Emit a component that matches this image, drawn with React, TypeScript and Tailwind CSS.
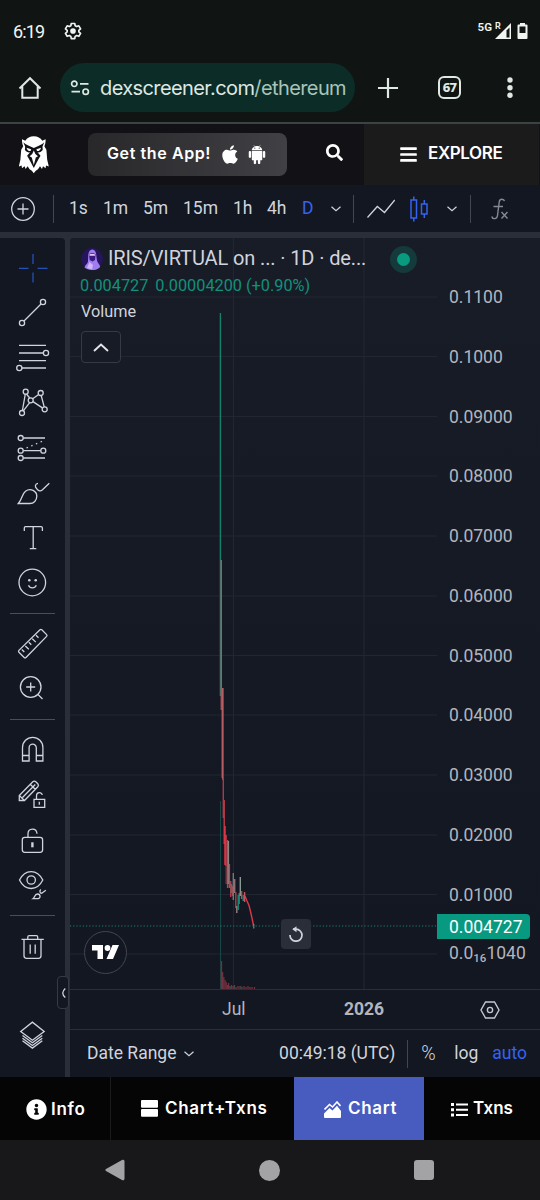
import type { ReactNode } from "react";
import { AiFillAndroid } from "react-icons/ai";
import { FaApple, FaBars, FaInfoCircle, FaSearch } from "react-icons/fa";

const prices = [
  "0.1100",
  "0.1000",
  "0.09000",
  "0.08000",
  "0.07000",
  "0.06000",
  "0.05000",
  "0.04000",
  "0.03000",
  "0.02000",
  "0.01000",
];

const gridLines = [
  59, 118.5, 178.5, 238, 298, 358, 417.5, 477, 537, 597, 656.5, 716,
];

// x, top, bottom, colour
const candles: [number, number, number, string][] = [
  [150.4, 75, 458, "#12826f"],
  [151.3, 322, 472, "#b0575b"],
  [152.2, 450, 540, "#c2434f"],
  [152.9, 450, 542, "#b9656a"],
  [153.3, 540, 580, "#a83b48"],
  [154.2, 562, 606, "#c03b48"],
  [155, 588, 627, "#f23645"],
  [156, 597, 628, "#e03a48"],
  [156.2, 628, 646, "#7b3340"],
  [157.6, 602, 650, "#8b5a60"],
  [158.4, 603, 646, "#8a8585"],
  [159.4, 626, 650, "#b04a55"],
  [160.7, 643, 659, "#b03d49"],
  [161.5, 646, 655, "#12907a"],
  [162.4, 648, 658, "#b03d49"],
  [163.3, 635, 662, "#6d7a78"],
  [164.7, 641, 655, "#8a7075"],
  [165.8, 654, 670, "#b03d49"],
  [166.8, 668, 675, "#9a8080"],
  [168.2, 657, 672, "#12907a"],
  [169.2, 655, 666, "#12907a"],
  [170.3, 639, 658, "#889b93"],
  [171.6, 653, 661, "#e03a48"],
  [173.2, 657, 663, "#12907a"],
  [174.6, 654, 664, "#c05a62"],
];

const volumes: [number, number][] = [
  [151.5, 28],
  [152.6, 17],
  [153.8, 12],
  [155, 9],
  [156.2, 7],
  [157.4, 4],
  [158.6, 6],
  [160, 3],
  [161.5, 4],
  [163, 3],
  [164.5, 4],
  [166, 2],
  [168, 3],
  [170, 3],
  [172, 2],
  [174, 3],
  [176, 2],
  [178, 3],
  [180, 2],
  [182, 2],
  [184.5, 2],
];

function Tool({
  children,
  className = "text-[#d1d4dc]",
}: {
  children: ReactNode;
  className?: string;
}) {
  return (
    <svg
      viewBox="0 0 65 45"
      className={`block h-[45px] w-[65px] shrink-0 ${className}`}
      fill="none"
      stroke="currentColor"
      strokeWidth="1.3"
    >
      {children}
    </svg>
  );
}

function ToolDivider() {
  return (
    <div className="flex h-4 shrink-0 items-center px-2.5">
      <div className="h-px w-full bg-[#4a4d57]" />
    </div>
  );
}

function Chevron({ className = "" }: { className?: string }) {
  return (
    <svg
      viewBox="0 0 10 6"
      className={`h-1.5 w-2.5 shrink-0 ${className}`}
      fill="none"
    >
      <path d="M.5.8 5 4.8 9.5.8" stroke="#d1d4dc" strokeWidth="1.2" />
    </svg>
  );
}

function StatusBar() {
  return (
    <div className="flex h-[62px] items-center text-[#f1f5f2]">
      <span className="ml-[13px] mt-0.5 w-[50px] font-['Roboto'] text-[18px] leading-none tracking-[-0.9px]">
        6:19
      </span>
      <svg viewBox="0 0 24 24" className="h-5 w-5" fill="none">
        <path
          d="M9.9 3h4.2l.5 2.7 1.8 1 2.6-.9 2.1 3.6-2.1 1.8v1.8l2.1 1.8-2.1 3.6-2.6-.9-1.8 1-.5 2.7H9.9l-.5-2.7-1.8-1-2.6.9-2.1-3.6L5 13V11.200L2.900 9.400 5 5.800l2.600.9 1.800-1z"
          stroke="currentColor"
          strokeWidth="2"
          strokeLinejoin="round"
        />
        <circle cx="12" cy="12" r="3.4" fill="currentColor" />
      </svg>
      <span className="ml-auto mb-[7px] font-['Roboto'] text-[11.5px] font-semibold leading-none">
        5G
      </span>
      <svg viewBox="0 0 34 20" className="ml-[3px] mr-[11px] h-5 w-[34px]">
        <text
          x="0"
          y="7.500"
          fontSize="9"
          fontWeight="600"
          fontFamily="Roboto"
          fill="currentColor"
        >
          R
        </text>
        <path d="M0 18 16 2v16z" fill="currentColor" />
        <path d="M11.500 9.500 14.500 6.500V16.500h-3z" fill="#101513" />
        <path
          fillRule="evenodd"
          d="M25 2h5v1.500h1.500a1 1 0 0 1 1 1V17a1 1 0 0 1-1 1h-8a1 1 0 0 1-1-1V4.500a1 1 0 0 1 1-1H25zM24.500 5.500v6.500h6V5.500z"
          fill="currentColor"
        />
      </svg>
    </div>
  );
}

function UrlBar() {
  return (
    <div className="flex h-[60px] items-start text-[#dfe8e3]">
      <svg
        viewBox="0 0 24 24"
        className="ml-[18px] mt-[14px] h-6 w-6 shrink-0"
        fill="none"
        stroke="currentColor"
        strokeWidth="2"
      >
        <path d="M1.500 12.500 12 2.200l10.500 10.300M4.300 10.500v11.300h15.400V10.500" />
      </svg>
      <div className="ml-[18px] mt-px flex h-[49px] w-[295px] shrink-0 items-center rounded-full bg-[#0c2d27]">
        <svg
          viewBox="0 0 20 16"
          className="ml-[10px] h-4 w-5 shrink-0"
          fill="none"
          stroke="currentColor"
          strokeWidth="1.700"
        >
          <circle cx="4.300" cy="3.800" r="2.700" />
          <path d="M10 3.800h8.500M1.500 11.700h8.500" />
          <circle cx="15.700" cy="11.700" r="2.700" />
        </svg>
        <span className="ml-[10px] whitespace-nowrap font-['Inter'] text-[20px] leading-none tracking-[-0.600px]">
          dexscreener.com<span className="text-[#a9c4b8]">/ethereum</span>
        </span>
      </div>
      <svg viewBox="0 0 20 20" className="ml-[23px] mt-[16px] h-5 w-5 shrink-0">
        <path d="M10 0v20M0 10h20" stroke="currentColor" strokeWidth="2.200" />
      </svg>
      <div className="ml-[40px] mt-[14px] flex h-[23px] w-[23px] shrink-0 items-center justify-center rounded-[6px] border-2 border-current font-['Noto_Sans'] text-[13px] font-extrabold leading-none tracking-[-0.800px]">
        67
      </div>
      <svg
        viewBox="0 0 6 22"
        className="ml-[46px] mt-[15px] h-[22px] w-1.5 shrink-0"
        fill="currentColor"
      >
        <circle cx="3" cy="3" r="2.700" />
        <circle cx="3" cy="10.700" r="2.700" />
        <circle cx="3" cy="18.300" r="2.700" />
      </svg>
    </div>
  );
}

function OwlLogo() {
  return (
    <svg viewBox="0 0 30 38" className="ml-[19px] h-[38px] w-[30px]">
      <path
        d="M3 3.200 6.300 4.800Q9 .3 14.800.3t8.500 4.500l3.300-1.600c.1 3-.3 5-1.200 7l2 3.500.8 10 1.600 6.800-2.800-1-.4 2.700-2.600-2-1 2.700-2-2.700-2 3c-1.500.8-3 2-4.200 4.100-1.200-2.100-2.700-3.300-4.200-4.100l-2-3-2 2.700-1-2.700-2.600 2-.4-2.700-2.800 1 1.600-6.800.8-10 2-3.500C3.300 8.200 2.900 6.200 3 3.200z"
        fill="#fff"
      />
      <path
        d="M4.300 6.300q2 2.300 5.500 3.400l5 2.300 5-2.300q3.500-1.100 5.500-3.400l-1.800 4.200.2 3.500q-2 3-5.200 2.300l3 3.400-2.200 3.800-4.500 8.500-4.500-8.500-2.200-3.800 3-3.400q-3.200.7-5.200-2.300l.2-3.500z"
        fill="#111116"
      />
      <path
        d="m14.800 14.500 1.600 3.500 2.600 2.200-2.200 1.300-2 7.500-2-7.500-2.200-1.300 2.600-2.200zM7.500 11.700l4.700 1.600-.6 1.700q-3 .4-4.100-3.300zM22.100 11.700l-4.700 1.600.6 1.700q3 .4 4.100-3.300z"
        fill="#fff"
      />
    </svg>
  );
}

function AppHeader() {
  return (
    <div className="flex h-[61px] items-center bg-[#111116] font-['Inter'] font-semibold text-white">
      <OwlLogo />
      <div className="ml-[39px] flex h-[43px] w-[199px] items-center rounded-lg bg-gradient-to-r from-[#28282b] to-[#414044]">
        <span className="-mt-1 ml-[19px] w-[114px] whitespace-nowrap text-[16px] leading-none tracking-[0.600px]">
          Get the App!
        </span>
        <FaApple className="h-[21px] w-[18px]" />
        <AiFillAndroid className="ml-[7px] h-[23px] w-[22px]" />
      </div>
      <FaSearch className="-mt-1 ml-[39px] h-[17px] w-[17px]" />
      <div className="ml-auto flex h-full w-[176px] items-center border-r border-[#111116] bg-[#1b1b1c] pb-1">
        <FaBars className="ml-[36px] mt-[3px] h-[19px] w-[17px]" />
        <span className="ml-[11px] mt-px text-[17px] leading-none tracking-[-0.400px]">
          EXPLORE
        </span>
      </div>
    </div>
  );
}

function ChartToolbar() {
  const intervals = [
    { label: "1s", className: "w-[34px]" },
    { label: "1m", className: "w-[40px]" },
    { label: "5m", className: "w-[40px]" },
    { label: "15m", className: "w-[50px]" },
    { label: "1h", className: "w-[34px]" },
    { label: "4h", className: "w-[35px]" },
    { label: "D", className: "w-[29px] text-[#3563f0]" },
  ];

  return (
    <div className="flex h-[47px] items-center bg-[#131722] text-[#d1d4dc]">
      <svg
        viewBox="0 0 24 24"
        className="ml-[11px] mt-px h-6 w-6"
        fill="none"
        stroke="currentColor"
        strokeWidth="1.300"
      >
        <circle cx="12" cy="12" r="11.300" />
        <path d="M12 6.500v11M6.500 12h11" />
      </svg>
      <div className="ml-[18px] h-7 w-px bg-[#434651]" />
      <div className="ml-[15px] mt-px flex text-[17.500px] leading-none">
        {intervals.map((item) => (
          <span key={item.label} className={item.className}>
            {item.label}
          </span>
        ))}
      </div>
      <Chevron />
      <div className="ml-[12px] h-7 w-px bg-[#434651]" />
      <svg
        viewBox="0 0 28 20"
        className="ml-[13px] h-5 w-7"
        fill="none"
        stroke="currentColor"
        strokeWidth="1.300"
      >
        <path d="m.5 18.500 9.800-11 7.200 6L27.800 1" />
      </svg>
      <svg
        viewBox="0 0 18 26"
        className="ml-[15px] h-[26px] w-[18px]"
        fill="none"
        stroke="#3563f0"
        strokeWidth="1.500"
      >
        <path d="M1 4h5.500v18H1zM3.800 4V.5M3.800 22v3.500M11.500 8H17v10h-5.500zM14.300 8V4M14.300 18v4" />
      </svg>
      <Chevron className="ml-[19px]" />
      <div className="ml-[13px] h-7 w-px bg-[#434651]" />
      <svg
        viewBox="0 0 18 22"
        className="ml-[20px] h-[22px] w-[18px] text-[#868993]"
        fill="none"
        stroke="currentColor"
        strokeWidth="1.400"
      >
        <path d="M13.500 3.200C13 1 9 .2 8.300 3.500L6.500 17.500C6 21.500 1.500 21.500.8 18.500M2.500 8.500h9.500M10.500 14l6 6.500M16.500 14l-6 6.500" />
      </svg>
    </div>
  );
}

function DrawingTools() {
  return (
    <div className="relative flex w-[65px] shrink-0 flex-col rounded-tr bg-[#131722] pt-[7px]">
      <Tool className="text-[#2451b8]">
        <path d="M19 23.300h9.500M37.500 23.300h10M33 9v10M33 27.500v10" />
      </Tool>
      <Tool>
        <circle cx="43" cy="12" r="2.600" />
        <circle cx="22" cy="33" r="2.600" />
        <path d="m24 31 17-17" />
      </Tool>
      <Tool>
        <path d="M19 10.400h27M19 18h24M19 25.700h27M22 33h24" />
        <circle cx="46" cy="18" r="2.600" />
        <circle cx="19.300" cy="33" r="2.600" />
      </Tool>
      <Tool>
        <circle cx="25.700" cy="11.700" r="2.500" />
        <circle cx="40.700" cy="13" r="2.500" />
        <circle cx="30.700" cy="20.300" r="2.500" />
        <circle cx="22" cy="33" r="2.500" />
        <circle cx="44.700" cy="29.300" r="2.500" />
        <path d="m25.300 14.200-2.900 16.300M26.500 14l3.200 4M29.700 22.600l-6.400 8.200M32.700 18.800l6-4.300M41.200 15.500l3 11.300M33 21.600l9.400 6.300" />
      </Tool>
      <Tool>
        <path d="M23.300 13H45M23.300 25.700h17.400M23.300 33H45" />
        <circle cx="20.700" cy="13" r="2.500" />
        <circle cx="20.700" cy="25.700" r="2.500" />
        <circle cx="43.300" cy="25.700" r="2.500" />
        <circle cx="20.700" cy="33" r="2.500" />
        <path d="m26.500 23 16.500-7" strokeDasharray="1.500 3.600" />
      </Tool>
      <Tool>
        <path d="M18.300 33.500c4.200-4.500 3.500-9.500 7.200-12.300 5-3.700 11.300-.2 11.300 5 0 4.300-3 7.300-7 7.300zM38 13.300c-3.300.5-3.200 3.500-1.200 5.500 2.200 2.700 4 2.500 5.700 1l6.800-6.500" />
      </Tool>
      <Tool>
        <path d="M24.300 16v-3c0-.8.4-1.300 1.300-1.300h15.500c.8 0 1.300.4 1.300 1.300v3M33.200 11.700v22M29.800 33.600h6.500" />
      </Tool>
      <Tool>
        <circle cx="32.300" cy="22.500" r="13.300" />
        <path d="M28.500 25.300c1.300 3.500 6.300 3.500 7.800 0" />
        <circle cx="29.300" cy="20.300" r="1.300" fill="currentColor" stroke="none" />
        <circle cx="35.700" cy="20.300" r="1.300" fill="currentColor" stroke="none" />
      </Tool>
      <ToolDivider />
      <Tool>
        <path d="M40 8.800q.9-.8 1.800 0l4.800 4.800q.8.900 0 1.800L26 36.500q-.9.900-1.800 0l-5.300-5.300q-.8-.9 0-1.800zM21.800 28.500l2.500 2.500M25.300 25l3.500 3.300M28.800 21.300l2.500 2.500M32.300 17.800l3.500 3.300M36 14.200l2.500 2.500" />
      </Tool>
      <Tool>
        <circle cx="30.700" cy="21" r="10.300" />
        <path d="m38 28.500 4.500 4.500M30.700 16.500v9M26.200 21h9" />
      </Tool>
      <ToolDivider />
      <Tool>
        <path d="M22.500 34V20.500a10.200 10.200 0 0 1 20.400 0V34h-6.600V20.800a3.600 3.600 0 0 0-7.200 0V34zM22.500 28.500h6.600M36.300 28.500h6.600" />
      </Tool>
      <Tool>
        <path d="m19.300 23.500 13.500-13.700q1.500-1.200 3 0l2 2q1.300 1.500 0 3L24.500 28.500h-5.200zM19.300 23.500l5.200 5M22.500 25.500l12.800-13M30.500 12.500l4.700 4.700" />
        <path d="M34 27.300h10.700v8H34zM36.500 27.300v-3.500c0-4 5.500-4 5.700-.8M39.300 29.800v3" />
      </Tool>
      <Tool>
        <rect x="22.300" y="20.300" width="20.300" height="15" rx="2.500" />
        <path d="M28 20v-3.200c0-6 8.500-6.500 9 0" />
        <path d="M32.400 25.300v5" strokeWidth="2.400" />
      </Tool>
      <Tool>
        <path d="M19.500 18c5.500-11.300 17.700-11.300 23.300 0-5.600 11.300-17.800 11.300-23.300 0zM33 36.700c2-1.500 1.500-4.700 4.500-4.700s4 4.700-.5 4.700zM41 27.500c-2 1-1 4 .8 3.700l4-3" />
        <circle cx="31.200" cy="18" r="4.200" />
      </Tool>
      <ToolDivider />
      <Tool>
        <path d="M21.500 16.300h22.300M27.800 16v-2q0-1.300 1.300-1.300h7.300q1.300 0 1.300 1.300v2M24 16.300v16.500q0 2.500 2.500 2.500h12q2.500 0 2.500-2.500V16.300M30.200 21.500v9.300M35.200 21.500v9.300" />
      </Tool>
      <div className="mt-[44px]">
        <Tool>
          <path d="m20.700 19.500 11.700-9.300 11.800 9.300-11.800 8.800zM22.500 23.500l9.900 7.300 9.900-7.300M22.500 26.200l9.900 7.300 9.900-7.300M22.500 28.800l9.900 7.300 9.900-7.300" />
        </Tool>
      </div>
      <div className="absolute left-[57px] top-[738px] z-10 flex h-[33px] w-[12px] items-center justify-center rounded border border-[#363a45] bg-[#131722]">
        <svg viewBox="0 0 5 10" className="h-2.5 w-[5px]" fill="none">
          <path d="M4.300.500Q-.8 5 4.300 9.500" stroke="#d1d4dc" strokeWidth="1.300" />
        </svg>
      </div>
    </div>
  );
}

function Legend() {
  return (
    <div className="absolute left-0 top-0 pl-[11px] pt-[9px] text-[#d1d4dc]">
      <div className="flex h-[24px] items-center">
        <svg viewBox="0 0 22 22" className="h-[22px] w-[22px] shrink-0">
          <circle cx="11" cy="11" r="11" fill="#26155c" />
          <path
            d="M3.500 19.500c.5-2.500 3-3.500 3.500-6C7.300 9 6.500 2 11.300 1.500c4.700.5 3.700 6.500 4.700 11 .5 2.500 3 4 3.200 6.500-2.500 2.500-4.700 3-8.200 3s-5.500-1-7.500-2.500z"
            fill="#9e7df0"
          />
          <path d="M8 6.500c1.500-2 5-2 6.500 0l-.5 5.500-2.500 1.500-2.800-1.500z" fill="#3a1a80" />
          <path d="M8.200 6.500c1.800-1 4.300-1 6 0l-.3 1.300H8.500z" fill="#e4c9f5" />
          <path d="m6 20 2.500-6 3.500 3-1 4.500z" fill="#d3b6fa" />
        </svg>
        <span className="-mt-0.5 ml-[5px] w-[282px] whitespace-nowrap text-[20px] leading-none tracking-[-0.120px]">
          IRIS/VIRTUAL on ... · 1D · de...
        </span>
        <span className="flex h-[27px] w-[27px] items-center justify-center rounded-full bg-[#143a3b]">
          <span className="h-[13px] w-[13px] rounded-full bg-[#0a9a80]" />
        </span>
      </div>
      <div className="-ml-px mt-[6px] flex gap-[7px] whitespace-nowrap text-[16.300px] leading-[18px] text-[#11917b]">
        <span>0.004727</span>
        <span>0.00004200 (+0.90%)</span>
      </div>
      <div className="mt-[8px] text-[16.300px] leading-[18px]">Volume</div>
      <div className="mt-[10px] flex h-[32px] w-[40px] items-center justify-center rounded border border-[#363a45] bg-[#171b26]">
        <svg viewBox="0 0 16 9" className="h-[9px] w-4" fill="none">
          <path d="m1 8 7-6.500L15 8" stroke="#e3e5ea" strokeWidth="1.900" />
        </svg>
      </div>
    </div>
  );
}

function PriceChart() {
  return (
    <svg viewBox="0 0 367 751" className="block h-[751px] w-[367px] shrink-0">
      {gridLines.map((y) => (
        <path key={y} d={`M0 ${y}H367`} stroke="#222631" strokeWidth="1.200" />
      ))}
      <path d="M163.500 0V751M294 0V751" stroke="#222631" strokeWidth="1.200" />
      <path d="M150.600 563V751" stroke="#194a4a" strokeWidth="1" />
      {volumes.map(([x, h]) => (
        <path
          key={x}
          d={`M${x} 751V${751 - h}`}
          stroke="#74303e"
          strokeWidth="1.300"
        />
      ))}
      <path d="M160 751v-3M171 751v-3M164 751v-3" stroke="#195a55" />
      {candles.map(([x, top, bottom, color]) => (
        <path
          key={x}
          d={`M${x} ${top}V${bottom}`}
          stroke={color}
          strokeWidth="1.400"
        />
      ))}
      <path
        d="m175 658 2 5 2 4.500 1.500 6 1.800 8 1.200 6"
        fill="none"
        stroke="#d93a48"
        strokeWidth="1.400"
      />
      <path d="M183.800 686v4.500" stroke="#889b93" />
      <path
        d="M0 688H367"
        stroke="#14806f"
        strokeWidth="1.200"
        strokeDasharray="1.200 2"
      />
    </svg>
  );
}

function PriceAxis() {
  return (
    <div className="relative flex-1 pt-[30px] text-[17.500px] leading-none text-[#b2b5be]">
      {prices.map((price) => (
        <div key={price} className="flex h-[59.750px] items-center pl-[12px]">
          {price}
        </div>
      ))}
      <div className="flex h-[56px] items-center whitespace-nowrap pl-[12px]">
        0.0
        <span className="mt-2.5 text-[11.500px] font-medium">16</span>
        1040
      </div>
      <div className="absolute left-0 top-[676px] flex h-[25px] w-[93px] items-center rounded-r-sm bg-[#089981] pl-[12px] pt-0.5 text-white">
        0.004727
      </div>
    </div>
  );
}

function ChartPanel() {
  return (
    <div className="ml-[5px] flex flex-1 flex-col rounded-tl bg-[#131722]">
      <div className="relative flex h-[751px] rounded-tl bg-linear-to-b from-[#181c27] to-[#131722]">
        <PriceChart />
        <PriceAxis />
        <Legend />
        <div className="absolute left-[14px] top-[693px] flex h-[43px] w-[43px] items-center justify-center rounded-full border-[1.500px] border-[#434651] bg-[#131722]">
          <svg viewBox="0 0 28 15" className="h-[15px] w-[28px]" fill="#fff">
            <path d="M0 0h11v14H5.500V5.500H0zM20.500 0H27l-6 14h-6.500z" />
            <circle cx="15.500" cy="3" r="2.900" />
          </svg>
        </div>
        <div className="absolute left-[211px] top-[681px] flex h-[30px] w-[30px] items-center justify-center rounded bg-[#2a2e39]">
          <svg
            viewBox="0 0 16 16"
            className="h-4 w-4"
            fill="none"
            stroke="#d1d4dc"
            strokeWidth="1.700"
          >
            <path d="M2 9a6 6 0 1 0 6-5.800H5" />
            <path d="M8.500.2v6L4.300 3.200z" fill="#d1d4dc" stroke="none" />
          </svg>
        </div>
      </div>
      <div className="flex h-[41px] items-center border-y border-[#2a2e39] text-[17.500px] leading-none text-[#b2b5be]">
        <span className="ml-[152px] w-[122px]">Jul</span>
        <span className="w-[136px] font-bold">2026</span>
        <svg
          viewBox="0 0 20 18"
          className="h-[18px] w-5"
          fill="none"
          stroke="#c5c8d0"
          strokeWidth="1.400"
        >
          <path d="M5.500 1h9L19 9l-4.500 8h-9L1 9z" />
          <circle cx="10" cy="9" r="2.600" />
        </svg>
      </div>
      <div className="flex flex-1 items-center text-[17.500px] leading-none text-[#d1d4dc]">
        <span className="ml-[17px] w-[97px] whitespace-nowrap">Date Range</span>
        <Chevron />
        <span className="ml-auto whitespace-nowrap tracking-[-0.030px]">
          00:49:18 (UTC)
        </span>
        <div className="ml-[12px] h-7 w-px bg-[#434651]" />
        <span className="ml-[13px] w-[33px] text-[19.500px] font-light">%</span>
        <span className="w-[38px]">log</span>
        <span className="mr-[13px] text-[#3563f0]">auto</span>
      </div>
    </div>
  );
}

function BottomTabs() {
  return (
    <div className="flex h-[63px] bg-[#050505] font-['Inter'] text-[17px] font-semibold leading-none tracking-[0.700px] text-white">
      <div className="flex w-[111px] items-center border-r border-[#1b1b1b] pl-[26px]">
        <FaInfoCircle className="mt-0.5 h-[21px] w-[21px]" />
        <span className="ml-[4px] mt-0.5">Info</span>
      </div>
      <div className="flex w-[183px] items-center pl-[30px]">
        <svg
          viewBox="0 0 17 17"
          className="h-[17px] w-[17px] shrink-0"
          fill="#fff"
        >
          <rect width="17" height="7.700" rx="1" />
          <rect y="9" width="17" height="7.700" rx="1" />
        </svg>
        <span className="ml-[7px] whitespace-nowrap">Chart+Txns</span>
      </div>
      <div className="flex w-[130px] items-center bg-[#485cc0] pl-[30px]">
        <svg viewBox="0 0 17 17" className="mt-0.5 h-[17px] w-[17px]">
          <path
            d="m.5 8.500 5-5 3 2.500L13 1l3.500 4"
            fill="none"
            stroke="#fff"
            strokeWidth="1.600"
          />
          <path
            d="M0 12.500 5.500 7l3 2.500L13 4.700l4 5.300v6a1 1 0 0 1-1 1H1a1 1 0 0 1-1-1z"
            fill="#fff"
          />
        </svg>
        <span className="ml-[7px]">Chart</span>
      </div>
      <div className="flex flex-1 items-center pl-[27px]">
        <svg viewBox="0 0 17 14" className="mt-0.5 h-3.5 w-[17px]" fill="#fff">
          <path d="M0 0h3v3H0zM0 5.300h3v3H0zM0 10.600h3v3H0zM5 .5h12v2H5zM5 5.800h12v2H5zM5 11.100h12v2H5z" />
        </svg>
        <span className="ml-[5px] tracking-normal">Txns</span>
      </div>
    </div>
  );
}

function NavigationBar() {
  return (
    <div className="flex h-[60px] items-center bg-[#18181b] text-[#a3a3a5]">
      <svg
        viewBox="0 0 20 22"
        className="ml-[105px] h-[22px] w-5"
        fill="currentColor"
      >
        <path d="M1 10 17 1c1.500-.8 2.500 0 2.500 1.500v17c0 1.500-1 2.300-2.500 1.500L1 12q-1.300-1 0-2z" />
      </svg>
      <div className="ml-[134px] h-[21px] w-[21px] rounded-full bg-current" />
      <div className="ml-[134px] h-5 w-5 rounded-[3px] bg-current" />
    </div>
  );
}

export default function App() {
  return (
    <div className="flex h-[1200px] w-[540px] flex-col overflow-hidden bg-[#101513] font-['Roboto',sans-serif]">
      <StatusBar />
      <UrlBar />
      <div className="h-0.5 bg-[#3b4442]" />
      <AppHeader />
      <ChartToolbar />
      <div className="flex h-[845px] bg-[#2a2e39] pt-[6px]">
        <DrawingTools />
        <ChartPanel />
      </div>
      <BottomTabs />
      <NavigationBar />
    </div>
  );
}
